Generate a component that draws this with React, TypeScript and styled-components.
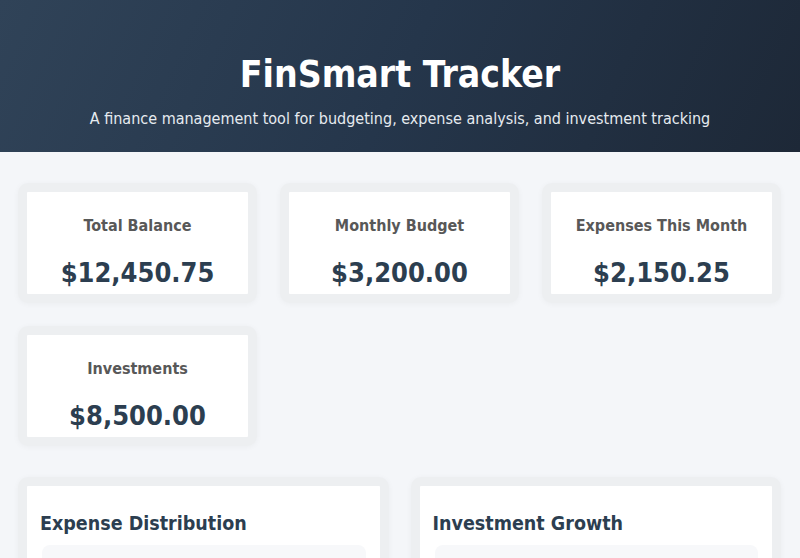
import React from "react";
import styled, { createGlobalStyle } from "styled-components";

const Global = createGlobalStyle`
  html, body { margin: 0; padding: 0; }
  body {
    background: #f4f6f9;
    font-family: "DejaVu Sans Condensed", "DejaVu Sans", sans-serif;
    font-stretch: semi-condensed;
    color: #333;
  }
`;

const Page = styled.div`
  min-height: 558px;
  background: #f4f6f9;
`;

const Header = styled.header`
  height: 152px;
  box-sizing: border-box;
  padding-top: 52px;
  background: linear-gradient(115deg, #304358 0%, #25364b 50%, #1d2837 100%);
  color: #fff;
  text-align: center;
`;

const Title = styled.h1`
  margin: 0;
  font-size: 37px;
  font-weight: 700;
  line-height: 46px;
`;

const Subtitle = styled.p`
  margin: 11px 0 0;
  font-size: 16px;
  line-height: 20px;
  color: #e6ebf0;
`;

const Main = styled.main`
  padding: 31px 19px 0 18px;
`;

const StatGrid = styled.div`
  display: grid;
  grid-template-columns: repeat(3, 1fr);
  column-gap: 23px;
  row-gap: 23px;
`;

const Card = styled.div`
  background: #fff;
  border: 9px solid #edeff1;
  border-radius: 10px;
  box-shadow: 0 1px 6px rgba(0, 0, 0, 0.04);
`;

const StatCard = styled(Card)`
  display: flex;
  flex-direction: column;
  align-items: center;
  padding-top: 23px;
  box-sizing: content-box;
  height: 79px;
`;

const StatLabel = styled.div`
  font-size: 16px;
  font-weight: 700;
  color: #585858;
  line-height: 22px;
`;

const StatValue = styled.div`
  margin-top: 19px;
  font-size: 27px;
  font-weight: 700;
  color: #2c3e50;
  line-height: 34px;
`;

const PanelGrid = styled.div`
  margin-top: 31px;
  display: grid;
  grid-template-columns: repeat(2, 1fr);
  column-gap: 22px;
`;

const Panel = styled(Card)`
  padding: 24px 14px 0 13px;
  height: 120px;
`;

const PanelTitle = styled.h2`
  margin: 0;
  font-size: 19.5px;
  font-weight: 700;
  color: #2c3e50;
  line-height: 28px;
`;

const ChartBox = styled.div`
  margin: 7px 0 0 2px;
  height: 200px;
  background: #f7f8fa;
  border-radius: 8px;
`;

const stats = [
  { label: "Total Balance", value: "$12,450.75" },
  { label: "Monthly Budget", value: "$3,200.00" },
  { label: "Expenses This Month", value: "$2,150.25" },
  { label: "Investments", value: "$8,500.00" },
];

export default function App() {
  return (
    <Page>
      <Global />
      <Header>
        <Title>FinSmart Tracker</Title>
        <Subtitle>
          A finance management tool for budgeting, expense analysis, and investment tracking
        </Subtitle>
      </Header>
      <Main>
        <StatGrid>
          {stats.map((s) => (
            <StatCard key={s.label}>
              <StatLabel>{s.label}</StatLabel>
              <StatValue>{s.value}</StatValue>
            </StatCard>
          ))}
        </StatGrid>
        <PanelGrid>
          <Panel>
            <PanelTitle>Expense Distribution</PanelTitle>
            <ChartBox />
          </Panel>
          <Panel>
            <PanelTitle>Investment Growth</PanelTitle>
            <ChartBox />
          </Panel>
        </PanelGrid>
      </Main>
    </Page>
  );
}
